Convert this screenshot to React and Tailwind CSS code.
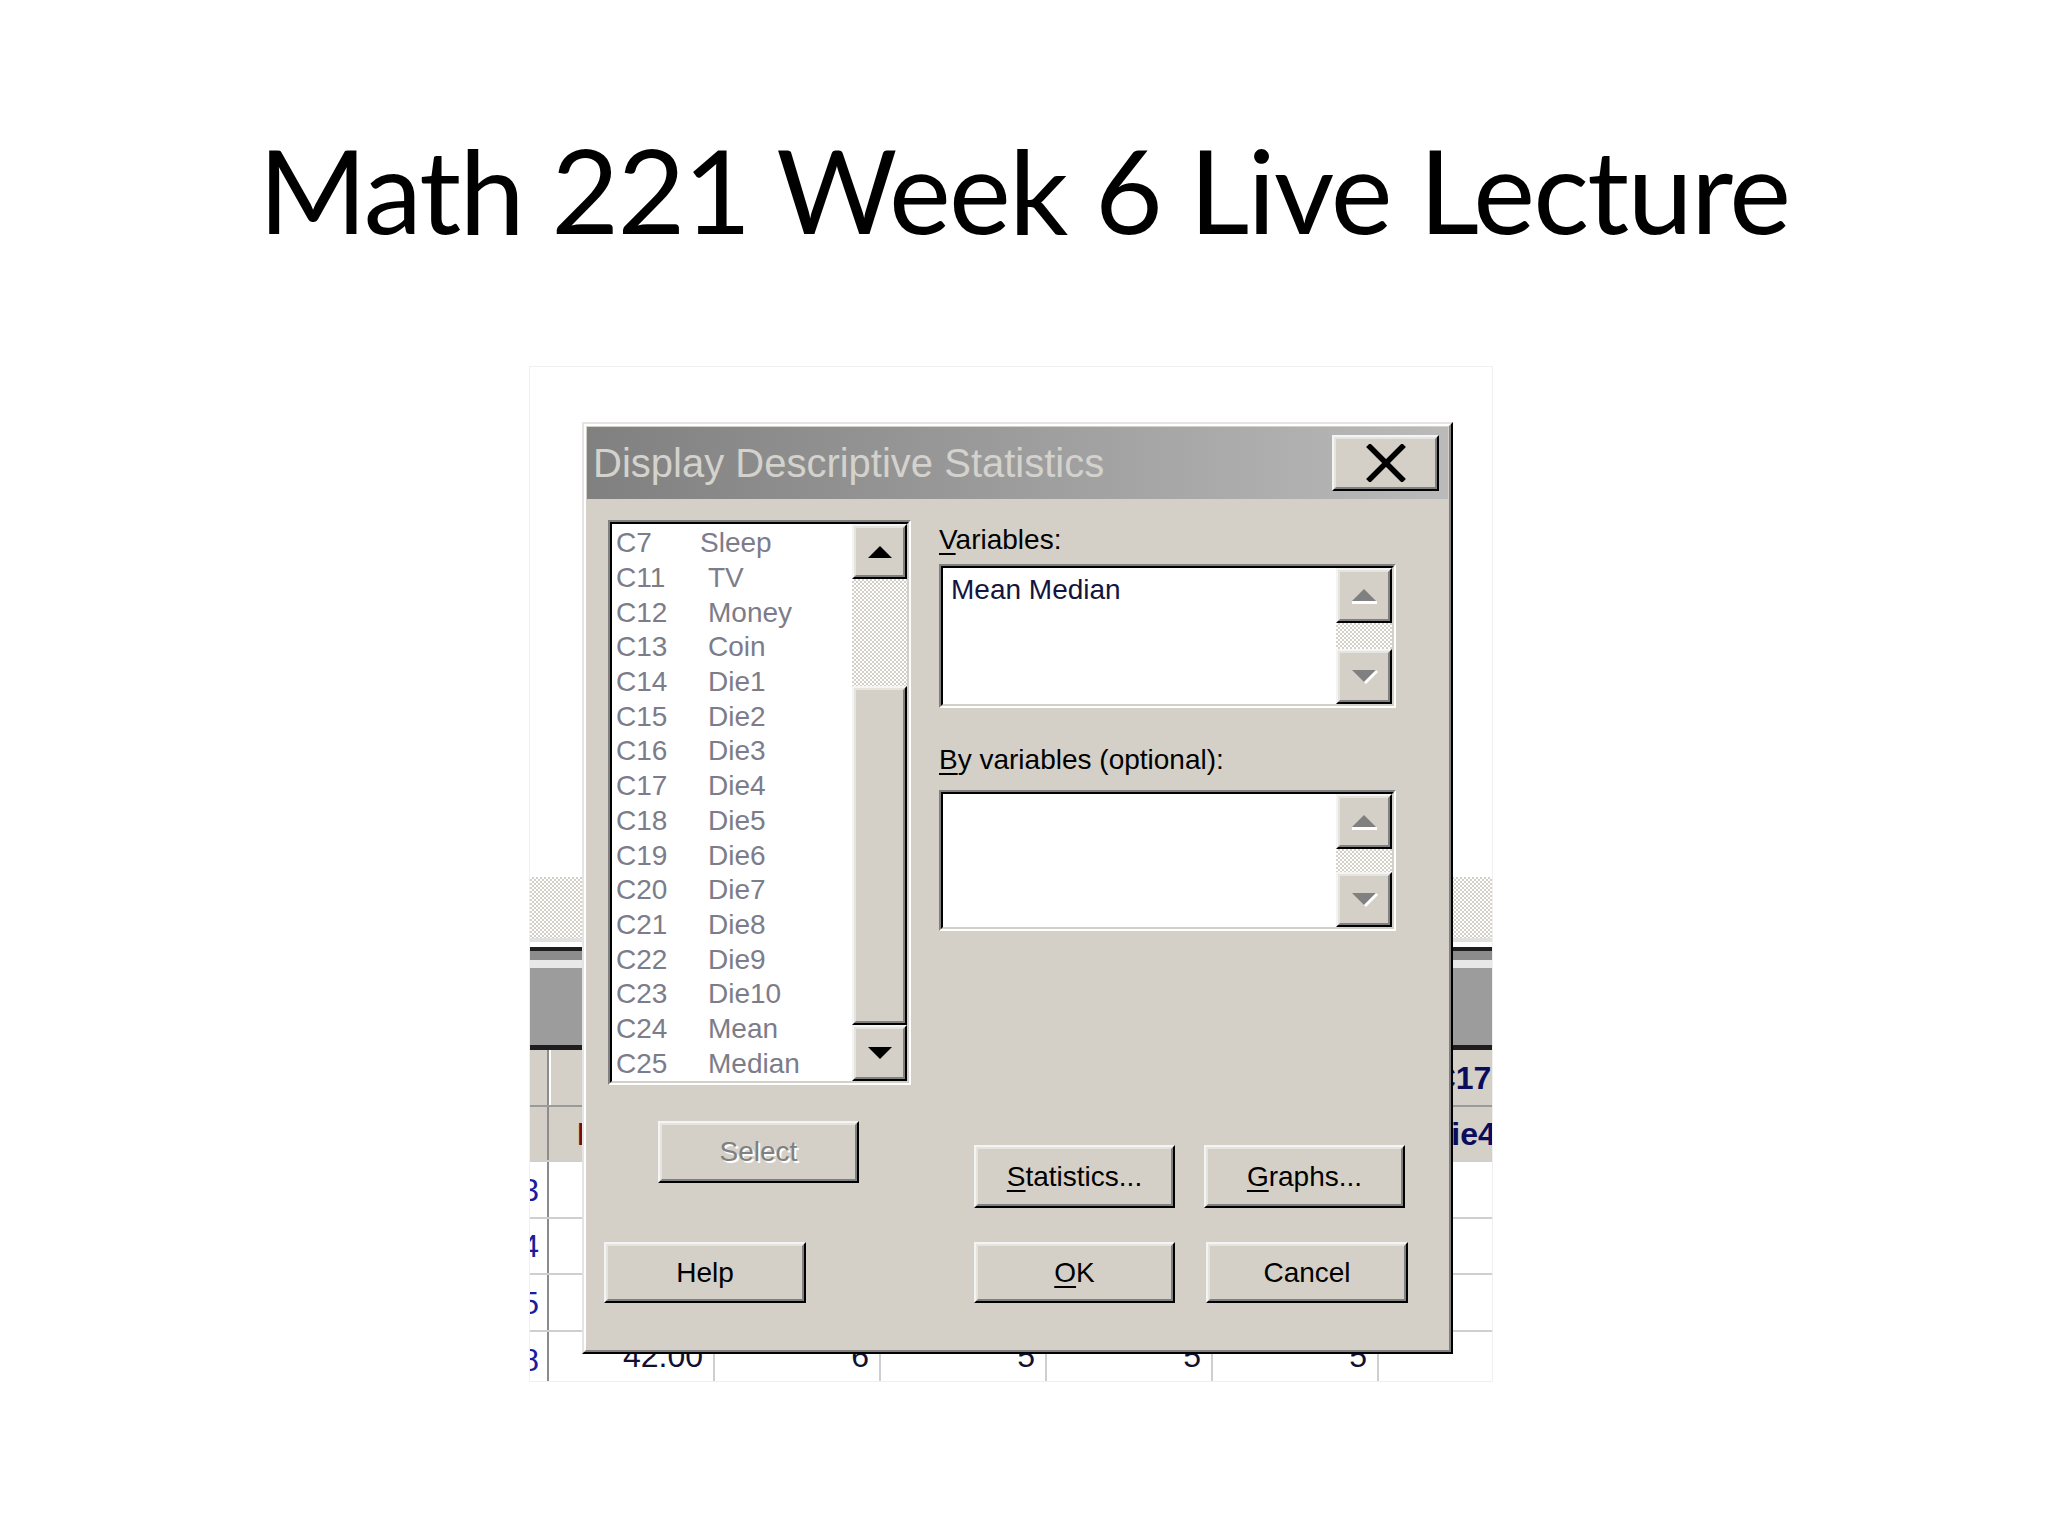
import React from "react";

const UI = "font-['Liberation_Sans',Arial,sans-serif]";
const CHECKER =
  "bg-[repeating-conic-gradient(#d4d0c8_0%_25%,#ffffff_0%_50%)] bg-[length:4px_4px]";

function Raised({ className = "", children }) {
  return (
    <div
      className={
        "border-2 border-t-[#f4f4f4] border-l-[#f4f4f4] border-r-black border-b-black " +
        className
      }
    >
      <div className="w-full h-full border-2 border-t-[#e6e4de] border-l-[#e6e4de] border-r-[#808080] border-b-[#808080] bg-[#d4d0c8] flex items-center justify-center">
        {children}
      </div>
    </div>
  );
}

function Sunken({ className = "", children }) {
  return (
    <div
      className={
        "border-2 border-t-[#808080] border-l-[#808080] border-r-white border-b-white " +
        className
      }
    >
      <div className="w-full h-full border-2 border-t-black border-l-black border-r-[#d4d0c8] border-b-[#d4d0c8] bg-white flex">
        {children}
      </div>
    </div>
  );
}

function ArrowUp({ disabled }) {
  return disabled ? (
    <svg width="30" height="18" viewBox="0 0 30 18">
      <path d="M15 2 L27 14 L3 14 Z" fill="#808080" />
      <rect x="3" y="14" width="25" height="3" fill="#ffffff" />
    </svg>
  ) : (
    <svg width="28" height="16" viewBox="0 0 28 16">
      <path d="M14 2 L26 14 L2 14 Z" fill="#000000" />
    </svg>
  );
}

function ArrowDown({ disabled }) {
  return disabled ? (
    <svg width="30" height="18" viewBox="0 0 30 18">
      <path d="M3 2 L27 2 L15 14 Z" fill="#808080" />
      <path d="M27 2 L29 4 L17 16 L15 14 Z" fill="#ffffff" />
    </svg>
  ) : (
    <svg width="28" height="16" viewBox="0 0 28 16">
      <path d="M2 2 L26 2 L14 14 Z" fill="#000000" />
    </svg>
  );
}

const items = [
  ["C7", "Sleep", true],
  ["C11", "TV"],
  ["C12", "Money"],
  ["C13", "Coin"],
  ["C14", "Die1"],
  ["C15", "Die2"],
  ["C16", "Die3"],
  ["C17", "Die4"],
  ["C18", "Die5"],
  ["C19", "Die6"],
  ["C20", "Die7"],
  ["C21", "Die8"],
  ["C22", "Die9"],
  ["C23", "Die10"],
  ["C24", "Mean"],
  ["C25", "Median"],
];

function SmallBox({ heightClass, checkerClass, children }) {
  return (
    <Sunken className={"w-[457px] " + heightClass}>
      <div className="flex-1 pl-[8px] pt-[4px] text-[28px] leading-[36px] text-[#14143c]">
        {children}
      </div>
      <div className="w-[56px] flex flex-col">
        <Raised className="h-[55px]">
          <ArrowUp disabled />
        </Raised>
        <div className={CHECKER + " " + checkerClass} />
        <Raised className="h-[55px]">
          <ArrowDown disabled />
        </Raised>
      </div>
    </Sunken>
  );
}

function Dialog() {
  return (
    <div
      className={
        "absolute left-[52px] top-[55px] w-[871px] h-[932px] bg-[#d4d0c8] border-2 border-t-[#e4e4e4] border-l-[#e4e4e4] border-r-black border-b-black " +
        UI
      }
    >
      <div className="h-full border-2 border-t-white border-l-white border-r-[#808080] border-b-[#808080] flex flex-col">
        {/* title bar */}
        <div className="mx-[1px] mt-[1px] h-[72px] bg-linear-to-r from-[#808080] to-[#bababa] flex items-center justify-between pl-[6px] pr-[9px]">
          <span className="text-[40px] leading-none text-[#d4d2cc] whitespace-nowrap">
            Display Descriptive Statistics
          </span>
          <Raised className="w-[107px] h-[56px]">
            <svg width="40" height="38" viewBox="0 0 40 38">
              <path
                d="M4 3 L36 35 M36 3 L4 35"
                stroke="#000"
                strokeWidth="5.5"
                strokeLinecap="square"
              />
            </svg>
          </Raised>
        </div>

        {/* row A */}
        <div className="flex mt-[21px]">
          <Sunken className="ml-[22px] w-[303px] h-[565px]">
            <div className="flex-1 pt-[2px] overflow-hidden text-[28px] text-[#7c7c8a]">
              {items.map(([c, n, shift]) => (
                <div
                  key={c}
                  className="flex items-center h-[34.7px] pl-[4px] whitespace-nowrap"
                >
                  <span className="w-[92px]">{c}</span>
                  <span className={shift ? "-ml-[8px]" : ""}>{n}</span>
                </div>
              ))}
            </div>
            <div className="w-[55px] flex flex-col">
              <Raised className="h-[55px]">
                <ArrowUp />
              </Raised>
              <div className={CHECKER + " h-[107px]"} />
              <Raised className="flex-1">
                <span />
              </Raised>
              <Raised className="h-[56px]">
                <ArrowDown />
              </Raised>
            </div>
          </Sunken>

          <div className="ml-[28px] flex flex-col text-[28px] text-black">
            <div className="mt-[3px] h-[34px] leading-[34px]">
              <span className="underline underline-offset-[4px] decoration-[2px]">V</span>
              ariables:
            </div>
            <div className="mt-[7px]">
              <SmallBox heightClass="h-[144px]" checkerClass="h-[26px]">
                Mean Median
              </SmallBox>
            </div>
            <div className="mt-[35px] h-[34px] leading-[34px]">
              <span className="underline underline-offset-[4px] decoration-[2px]">B</span>
              y variables (optional):
            </div>
            <div className="mt-[13px]">
              <SmallBox heightClass="h-[141px]" checkerClass="h-[23px]" />
            </div>
          </div>
        </div>

        {/* row B */}
        <div className="flex items-start text-[28px]">
          <Raised className="mt-[36px] ml-[72px] w-[201px] h-[62px]">
            <span className="text-[#808080] [text-shadow:2px_2px_0_#ffffff]">Select</span>
          </Raised>
          <Raised className="mt-[60px] ml-[115px] w-[201px] h-[63px]">
            <span className="text-black">
              <span className="underline underline-offset-[4px] decoration-[2px]">S</span>
              tatistics...
            </span>
          </Raised>
          <Raised className="mt-[60px] ml-[29px] w-[201px] h-[63px]">
            <span className="text-black">
              <span className="underline underline-offset-[4px] decoration-[2px]">G</span>
              raphs...
            </span>
          </Raised>
        </div>

        {/* row C */}
        <div className="flex items-start mt-[34px] text-[28px] text-black">
          <Raised className="ml-[18px] w-[202px] h-[61px]">
            <span>Help</span>
          </Raised>
          <Raised className="ml-[168px] w-[201px] h-[61px]">
            <span>
              <span className="underline underline-offset-[4px] decoration-[2px]">O</span>K
            </span>
          </Raised>
          <Raised className="ml-[31px] w-[202px] h-[61px]">
            <span>Cancel</span>
          </Raised>
        </div>
      </div>
    </div>
  );
}

const headNums = ["C12", "C13", "C14", "C15", "C16", "C17"];
const headNames = ["Money", "Coin", "Die1", "Die2", "Die3", "Die4"];
const rows = [
  { n: "3", v: ["", "", "", "", "", ""], h: "h-[57px]" },
  { n: "4", v: ["", "", "", "", "", ""], h: "h-[56px]" },
  { n: "5", v: ["", "", "", "", "", ""], h: "h-[57px]" },
  { n: "8", v: ["42.00", "6", "5", "5", "5", ""], h: "h-[57px]" },
];

function Sheet() {
  return (
    <div className={"flex flex-col " + UI}>
      <div className="h-[510px]" />
      <div className={CHECKER + " h-[61px]"} />
      <div className="h-[4px] bg-[#e0e0e0]" />
      <div className="h-[5px] bg-white" />
      <div className="h-[4px] bg-[#1e1e1e]" />
      <div className="h-[9px] bg-[#8c8c8c]" />
      <div className="h-[8px] bg-[#e8e8e8]" />
      <div className="h-[77px] bg-[#9c9c9c]" />
      <div className="h-[5px] bg-[#1e1e1e]" />

      {/* header row 1 */}
      <div className="flex h-[57px] bg-[#d4d0c8] border-b-2 border-[#9a9a9a]">
        <div className="w-[19px] shrink-0 border-r-2 border-[#8c8c8c]" />
        {headNums.map((t) => (
          <div
            key={t}
            className="w-[166px] shrink-0 border-l-2 border-l-white border-r-2 border-r-[#9a9a9a] flex items-center justify-center text-[32px] font-bold text-[#0c0c5c]"
          >
            {t}
          </div>
        ))}
      </div>
      {/* header row 2 */}
      <div className="flex h-[53px] bg-[#d4d0c8]">
        <div className="w-[19px] shrink-0 border-r-2 border-[#8c8c8c]" />
        {headNames.map((t, i) => (
          <div
            key={t}
            className={
              i === 0
                ? "w-[166px] shrink-0 flex items-center pl-[28px] text-[32px] font-bold text-[#7a0c0c]"
                : "w-[166px] shrink-0 flex items-center justify-center text-[32px] font-bold text-[#0c0c5c]"
            }
          >
            {t}
          </div>
        ))}
      </div>
      {/* data rows */}
      {rows.map((r) => (
        <div key={r.n} className={"flex bg-white border-t-2 border-[#cfcfcf] " + r.h}>
          <div className="w-[19px] shrink-0 border-r-2 border-[#8c8c8c] overflow-hidden flex items-center justify-end pr-[8px] text-[32px] text-[#1c1c9c]">
            {r.n}
          </div>
          {r.v.map((v, i) => (
            <div
              key={i}
              className="w-[166px] shrink-0 border-r-2 border-[#cfcfcf] flex items-center justify-end pr-[10px] pb-[8px] text-[32px] text-[#101030]"
            >
              {v}
            </div>
          ))}
        </div>
      ))}
    </div>
  );
}

export default function App() {
  return (
    <div className="w-[2048px] h-[1536px] bg-white overflow-hidden">
      <h1 className="font-['Lato',sans-serif] font-normal text-[117px] tracking-[-0.015em] leading-none text-black text-center pt-[131px] whitespace-nowrap">
        Math 221 Week 6 Live Lecture
      </h1>
      <div className="ml-[529px] mt-[118px] w-[964px] h-[1016px] relative overflow-hidden bg-white border border-[#f0f0f0]">
        <Sheet />
        <Dialog />
      </div>
    </div>
  );
}
